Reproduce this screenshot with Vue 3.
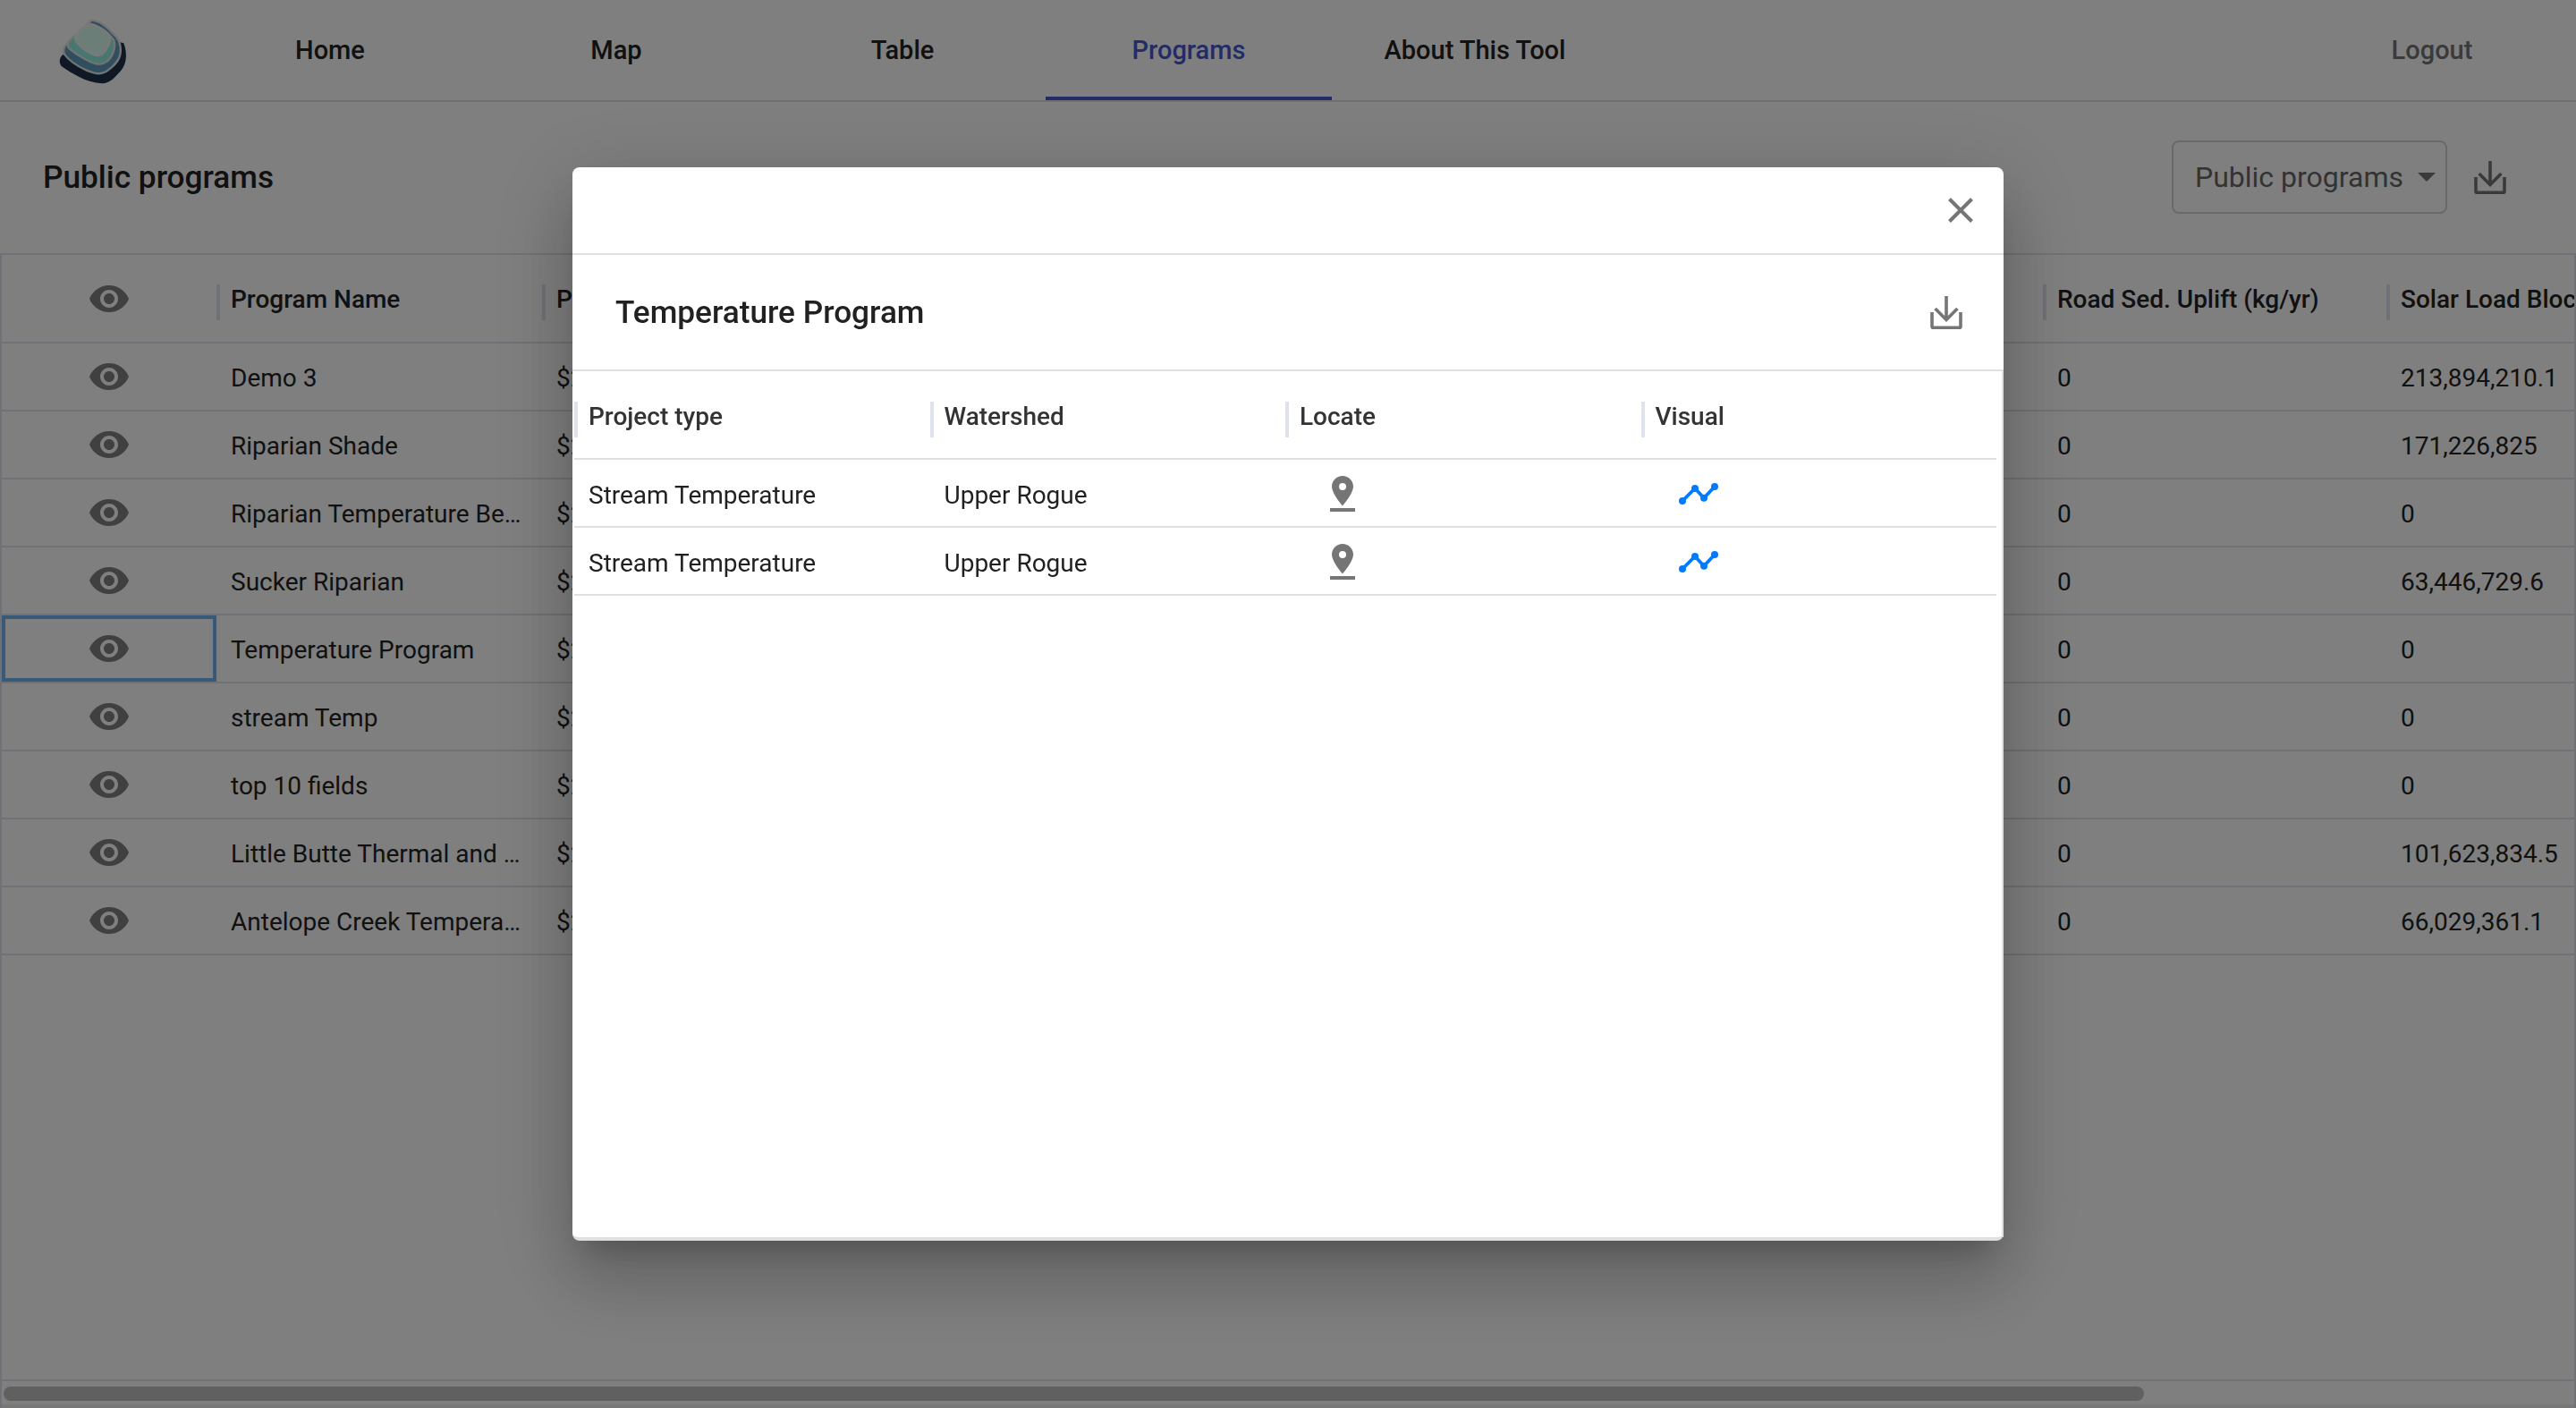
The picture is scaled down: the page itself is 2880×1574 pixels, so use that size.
<script setup>
const navItems = ['Home', 'Map', 'Table', 'Programs', 'About This Tool'];

const programs = [
    { name: 'Demo 3', road: '0', solar: '213,894,210.1' },
    { name: 'Riparian Shade', road: '0', solar: '171,226,825' },
    { name: 'Riparian Temperature Benefits', road: '0', solar: '0' },
    { name: 'Sucker Riparian', road: '0', solar: '63,446,729.6' },
    { name: 'Temperature Program', road: '0', solar: '0', focused: true },
    { name: 'stream Temp', road: '0', solar: '0' },
    { name: 'top 10 fields', road: '0', solar: '0' },
    { name: 'Little Butte Thermal and Riparian', road: '0', solar: '101,623,834.5' },
    { name: 'Antelope Creek Temperature', road: '0', solar: '66,029,361.1' },
];

const projects = [
    { type: 'Stream Temperature', watershed: 'Upper Rogue' },
    { type: 'Stream Temperature', watershed: 'Upper Rogue' },
];

const eyePath = 'M12 4.5C7 4.5 2.73 7.61 1 12c1.73 4.39 6 7.5 11 7.5s9.27-3.11 11-7.5c-1.73-4.39-6-7.5-11-7.5zM12 17c-2.76 0-5-2.24-5-5s2.24-5 5-5 5 2.24 5 5-2.24 5-5 5zm0-8c-1.66 0-3 1.34-3 3s1.34 3 3 3 3-1.34 3-3-1.34-3-3-3z';
const downloadPath = 'M1 9v8a.7.7 0 0 0 .7.7h14.600a.7.7 0 0 0 .7-.7V9M9 0v13M2.800 7l6.200 6.200L15.200 7';
</script>

<template>
    <div class="page">
        <nav class="nav">
            <svg class="logo" viewBox="0 0 390 330">
                <path fill="#22304a" d="M100 178C82 186 74 205 86 222C120 245 170 278 222 280C252 280 268 255 285 238C305 215 308 180 295 145L200 120Z" />
                <path fill="#5f9fc0" stroke="#e6e6e6" stroke-width="7" d="M187 68C215 70 242 92 256 110C275 125 287 150 284 178C280 205 262 222 236 240C215 252 195 246 170 236C140 222 112 204 96 182C90 168 94 156 106 146Z" />
                <path fill="#8eeede" stroke="#e6e6e6" stroke-width="7" d="M180 80C205 82 245 110 262 135C268 155 262 185 240 205C220 220 205 215 185 208C160 196 130 180 110 160C104 150 110 136 125 125Z" />
                <path fill="#d6fff0" stroke="#f2f2f2" stroke-width="8" d="M180 82C200 82 235 102 248 120C252 140 240 165 222 182C210 190 195 185 178 176C160 165 142 150 134 136C130 126 138 112 150 102C160 92 170 84 180 82Z" />
            </svg>
            <a v-for="item in navItems" :key="item" class="nav-item" :class="{ active: item === 'Programs' }">{{ item }}</a>
            <a class="nav-item logout">Logout</a>
        </nav>

        <header class="toolbar">
            <h1 class="title">Public programs</h1>
            <div class="select">
                <span>Public programs</span>
                <span class="caret"></span>
            </div>
            <svg class="download" viewBox="0 0 18 18.500" fill="none" stroke="#757575" stroke-width="1.800">
                <path :d="downloadPath" />
            </svg>
        </header>

        <section class="grid">
            <div class="grid-row grid-head">
                <div class="cell eye-cell">
                    <svg class="eye" viewBox="0 0 24 24"><path :d="eyePath" /></svg>
                </div>
                <div class="cell sep">Program Name</div>
                <div class="cell sep">Program Cost</div>
                <div class="cell sep">Road Sed. Uplift (kg/yr)</div>
                <div class="cell sep">Solar Load Blocked (kcal/d)</div>
            </div>
            <div v-for="p in programs" :key="p.name" class="grid-row">
                <div class="cell eye-cell" :class="{ focused: p.focused }">
                    <svg class="eye" viewBox="0 0 24 24"><path :d="eyePath" /></svg>
                </div>
                <div class="cell"><span class="ellipsis">{{ p.name }}</span></div>
                <div class="cell">$2</div>
                <div class="cell">{{ p.road }}</div>
                <div class="cell">{{ p.solar }}</div>
            </div>
            <div class="scroll-track"><div class="scroll-thumb"></div></div>
        </section>

        <div class="overlay">
            <div class="dialog">
                <div class="dialog-top">
                    <svg class="close" viewBox="0 0 28 28" stroke="#757575" stroke-width="4" fill="none">
                        <path d="M1.500 1.500l25 25M26.500 1.500l-25 25" />
                    </svg>
                </div>
                <div class="dialog-title">
                    <h2>Temperature Program</h2>
                    <svg class="download" viewBox="0 0 18 18.500" fill="none" stroke="#757575" stroke-width="1.800">
                        <path :d="downloadPath" />
                    </svg>
                </div>
                <div class="inner">
                    <div class="inner-row inner-head">
                        <div class="inner-cell sep">Project type</div>
                        <div class="inner-cell sep">Watershed</div>
                        <div class="inner-cell sep">Locate</div>
                        <div class="inner-cell sep">Visual</div>
                    </div>
                    <div v-for="(row, i) in projects" :key="i" class="inner-row">
                        <div class="inner-cell">{{ row.type }}</div>
                        <div class="inner-cell">{{ row.watershed }}</div>
                        <div class="inner-cell">
                            <svg class="pin" viewBox="0 0 28 40">
                                <path fill="#757575" fill-rule="evenodd" d="M14 0C7.400 0 2 5.200 2 11.800 2 20 14 33.500 14 33.500S26 20 26 11.800C26 5.200 20.600 0 14 0ZM14 8a4 4 0 1 1 0 8 4 4 0 0 1 0-8Z" />
                                <rect y="36" width="28" height="4" fill="#757575" />
                            </svg>
                        </div>
                        <div class="inner-cell">
                            <svg class="trend" viewBox="0 0 44 24">
                                <path d="M4 20L18 6L28 16.700L40 4" fill="none" stroke="#007bff" stroke-width="3.800" />
                                <circle cx="4" cy="20" r="4" fill="#007bff" />
                                <circle cx="18" cy="6" r="4" fill="#007bff" />
                                <circle cx="28" cy="16.700" r="4" fill="#007bff" />
                                <circle cx="40" cy="4" r="4" fill="#007bff" />
                            </svg>
                        </div>
                    </div>
                </div>
            </div>
        </div>
    </div>
</template>

<style>
html, body {
    margin: 0;
    background: #fff;
}
</style>

<style scoped>
.page {
    width: 2880px;
    height: 1574px;
    overflow: hidden;
    display: flex;
    flex-direction: column;
    background: #fff;
    font-family: Roboto, "Liberation Sans", sans-serif;
    font-size: 28px;
    color: #222;
}

.nav {
    height: 112px;
    flex: none;
    display: flex;
    align-items: stretch;
    padding-left: 40px;
    padding-right: 1px;
    border-bottom: 2px solid #dcdcdc;
}

.logo {
    width: 130px;
    height: 110px;
    margin-right: 39px;
}

.nav-item {
    width: 320px;
    display: flex;
    align-items: center;
    justify-content: center;
    font-size: 29px;
    font-weight: 500;
    box-sizing: border-box;
    padding-top: 4px;
    border-bottom: 4px solid transparent;
}

.nav-item.active {
    color: #4658cc;
    border-bottom-color: #4658cc;
}

.nav-item.logout {
    margin-left: auto;
    color: #757575;
}

.toolbar {
    height: 169px;
    flex: none;
    display: flex;
    align-items: center;
    padding: 0 78px 1px 48px;
    box-sizing: border-box;
}

.title {
    margin: 0 auto 0 0;
    font-size: 35.200px;
    font-weight: 500;
}

.select {
    width: 308px;
    height: 82px;
    box-sizing: border-box;
    display: flex;
    align-items: center;
    justify-content: space-between;
    padding: 0 11px 0 24px;
    border: 2px solid #ced4da;
    border-radius: 8px;
    font-size: 32px;
    color: #666;
    margin-right: 30px;
}

.caret {
    width: 0;
    height: 0;
    border-left: 10px solid transparent;
    border-right: 10px solid transparent;
    border-top: 10px solid #757575;
}

.download {
    width: 36px;
    height: 37px;
    flex: none;
}

.grid {
    flex: 1;
    position: relative;
    box-sizing: border-box;
    border: solid #dde2eb;
    border-width: 2px 2px 0;
}

.grid-row {
    display: grid;
    grid-template-columns: 240px 364px 1678px 384px 1fr;
    height: 76px;
    box-sizing: border-box;
    border-bottom: 2px solid #dde2eb;
    overflow: hidden;
}

.grid-head {
    height: 99px;
    font-weight: 500;
}

.cell {
    position: relative;
    display: flex;
    align-items: center;
    padding: 2px 16px 0;
    white-space: nowrap;
    min-width: 0;
    overflow: hidden;
}

.grid-head .cell {
    padding-top: 1px;
}

.ellipsis {
    overflow: hidden;
    text-overflow: ellipsis;
}

.eye-cell {
    justify-content: center;
    padding: 0;
    box-sizing: border-box;
}

.grid-head .eye-cell {
    padding-top: 0;
}

.eye-cell.focused {
    border: 4px solid #6fb4f5;
}

.eye {
    width: 48px;
    height: 48px;
    fill: #808080;
}

.sep::before {
    content: '';
    position: absolute;
    left: 0;
    top: 33px;
    width: 4px;
    height: 40px;
    background: #dde2eb;
}

.scroll-track {
    position: absolute;
    left: 0;
    right: 0;
    bottom: 0;
    height: 32px;
    box-sizing: border-box;
    border-top: 2px solid #dde2eb;
    border-bottom: 4px solid #efefef;
    padding-top: 6px;
}

.scroll-thumb {
    width: 2393px;
    height: 16px;
    margin-left: 2px;
    border-radius: 8px;
    background: #c1c1c1;
}

.overlay {
    position: fixed;
    inset: 0;
    background: rgba(0, 0, 0, 0.5);
}

.dialog {
    position: absolute;
    left: 640px;
    top: 187px;
    width: 1600px;
    height: 1200px;
    box-sizing: border-box;
    background: #fff;
    color: #212121;
    border-radius: 8px;
    border-bottom: 4px solid #e0e0e0;
    box-shadow: 0 22px 30px -14px rgba(0, 0, 0, 0.2), 0 48px 76px 6px rgba(0, 0, 0, 0.14), 0 18px 92px 16px rgba(0, 0, 0, 0.12);
}

.dialog-top {
    height: 96px;
    display: flex;
    align-items: center;
    justify-content: flex-end;
    padding-right: 34px;
    border-bottom: 2px solid #e0e0e0;
}

.close {
    width: 28px;
    height: 28px;
    margin-top: -1px;
}

.dialog-title {
    height: 128px;
    display: flex;
    align-items: center;
    justify-content: space-between;
    padding: 0 46px 0 48px;
    border-bottom: 2px solid #e0e0e0;
}

.dialog-title h2 {
    margin: 0;
    font-size: 35.200px;
    font-weight: 500;
}

.inner {
    margin-left: 2px;
    height: 968px;
    box-sizing: border-box;
    border-right: 2px solid #e0e0e0;
}

.inner-row {
    display: grid;
    grid-template-columns: repeat(4, 397.500px);
    width: 1590px;
    height: 76px;
    box-sizing: border-box;
    border-bottom: 2px solid #e0e0e0;
}

.inner-head {
    height: 99px;
    font-weight: 500;
    color: #333;
}

.inner-cell {
    position: relative;
    display: flex;
    align-items: center;
    padding: 4px 16px 0;
    white-space: nowrap;
}

.inner-head .sep::before {
    top: 34px;
}

.pin {
    width: 28px;
    height: 40px;
    margin: -2px 0 0 34px;
}

.trend {
    width: 44px;
    height: 24px;
    margin: -2px 0 0 26px;
}
</style>
